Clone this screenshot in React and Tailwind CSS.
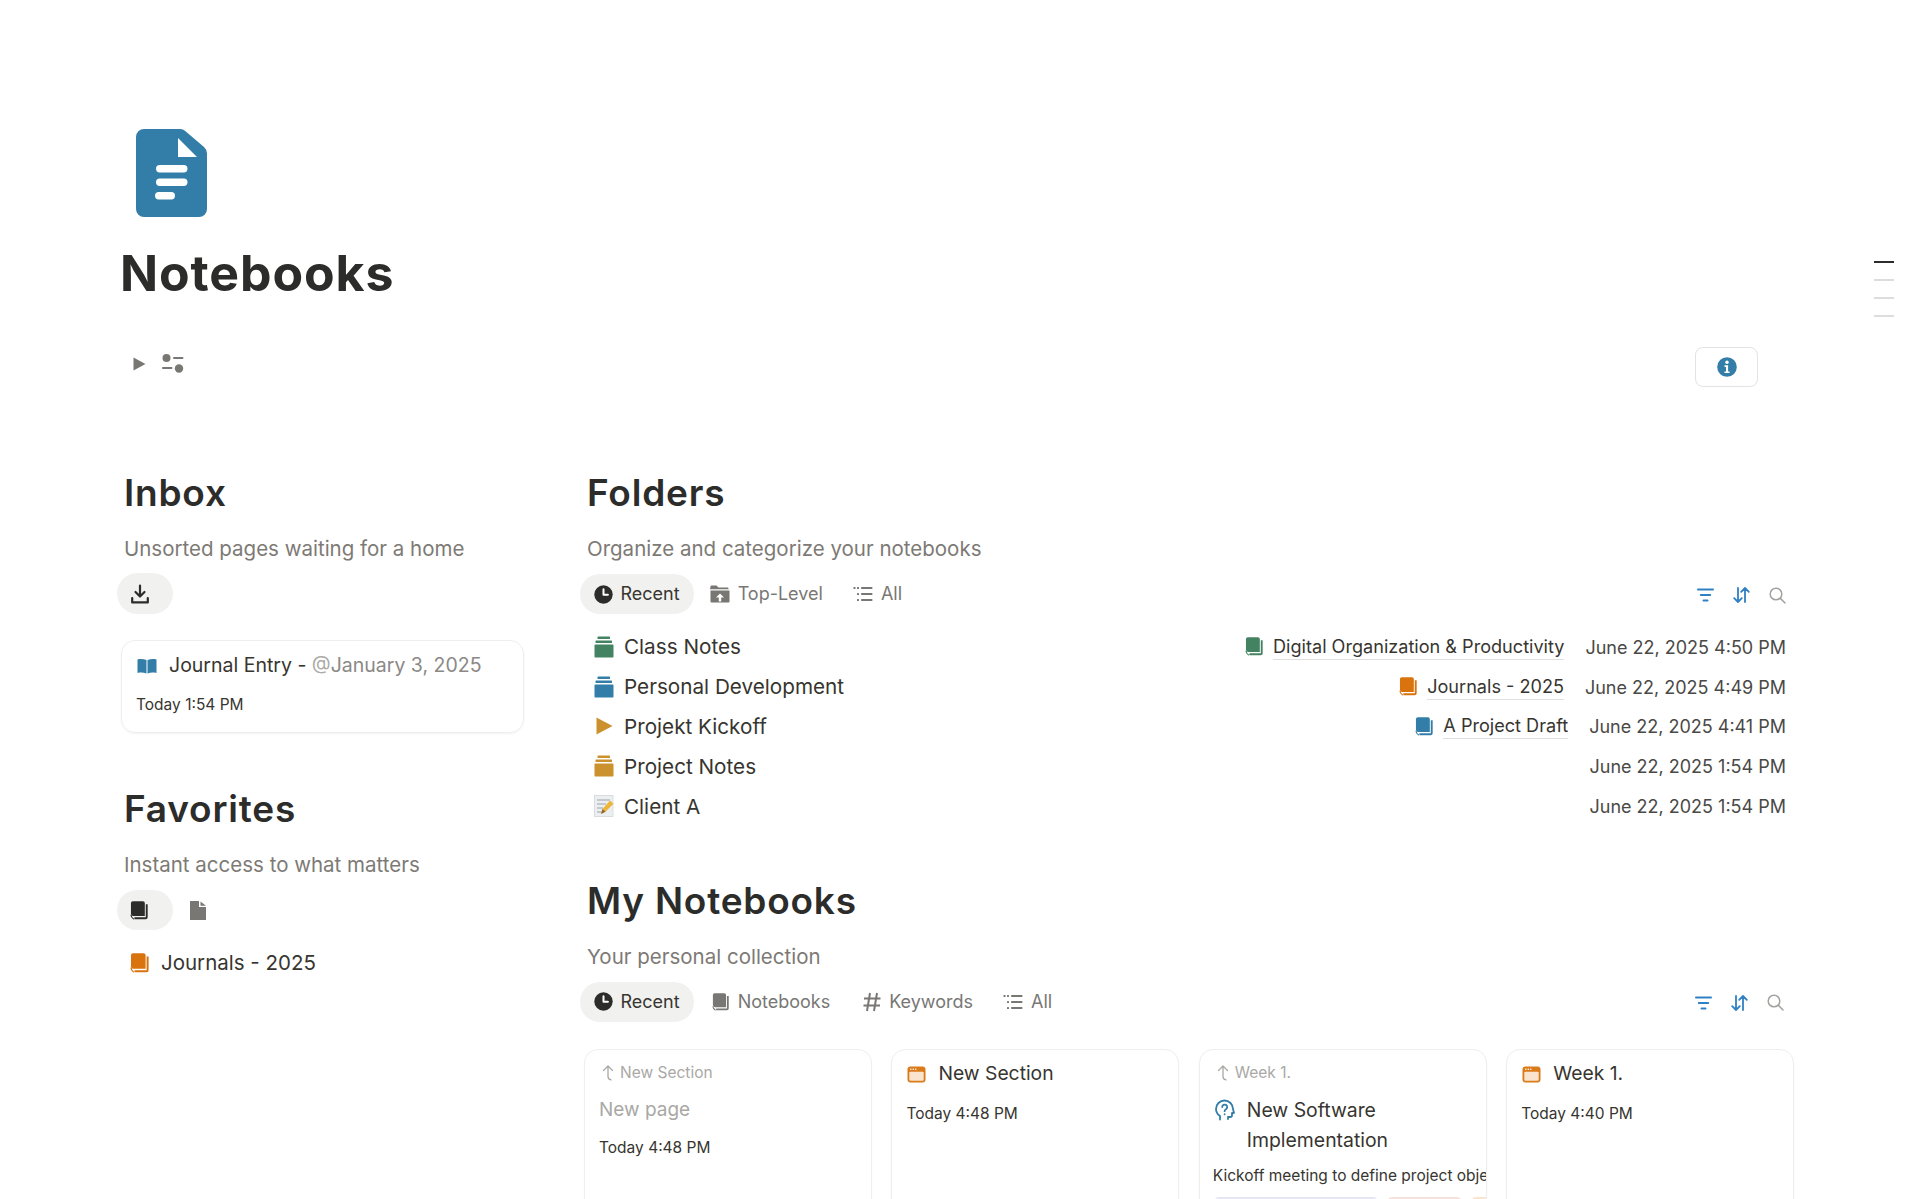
import React from "react";

const ink = "#2c2c2b";

const Stack = ({ c }) => (
  <svg width="20" height="22" viewBox="0 0 20 22" fill={c}>
    <rect x="3.5" y="0.5" width="12.5" height="2.6" rx="0.6" />
    <rect x="1.5" y="4.5" width="16.5" height="2.6" rx="0.6" />
    <rect x="0.5" y="8.6" width="19" height="13" rx="0.8" />
  </svg>
);

const Copy = ({ c, s = 20 }) => (
  <svg width={s} height={s} viewBox="0 0 20 20">
    <path d="M1 2.2A2 2 0 0 1 3 .2h10.6a2 2 0 0 1 2 2v13.6H3.4A2.4 2.4 0 0 1 1 13.4z" fill={c} />
    <path d="M17.6 3.4v13.8a1 1 0 0 1-1 1H4.6" fill="none" stroke={c} strokeWidth="2" />
    <path d="M1 14.6c0 2 1 3.4 3 4.6" fill="none" stroke={c} strokeWidth="1.2" />
  </svg>
);

const Clock = ({ c }) => (
  <svg width="19" height="19" viewBox="0 0 19 19">
    <circle cx="9.5" cy="9.5" r="9.2" fill={c} />
    <path d="M9.5 4.2v5.6h4.4" fill="none" stroke="#fff" strokeWidth="2" strokeLinecap="round" strokeLinejoin="round" />
  </svg>
);

const ListIcon = () => (
  <svg width="20" height="16" viewBox="0 0 20 16" fill="#787774">
    <rect x="0.5" y="1" width="2" height="2" rx="0.6" />
    <rect x="4" y="1" width="2" height="2" rx="0.6" />
    <rect x="8" y="1" width="11.5" height="2" rx="0.8" />
    <rect x="4" y="7" width="2" height="2" rx="0.6" />
    <rect x="8" y="7" width="11.5" height="2" rx="0.8" />
    <rect x="4" y="13" width="2" height="2" rx="0.6" />
    <rect x="8" y="13" width="11.5" height="2" rx="0.8" />
  </svg>
);

const FolderUp = () => (
  <svg width="20" height="18" viewBox="0 0 20 18" fill="#787774">
    <path d="M0.5 1.5a1 1 0 0 1 1-1h5l2 2h9a1 1 0 0 1 1 1v.7h-18.500z" />
    <path fillRule="evenodd" d="M0.5 5.500h19v11a1 1 0 0 1-1 1h-17a1 1 0 0 1-1-1zM10 8.500l-4 4h2.800v4h2.400v-4h2.800z" />
  </svg>
);

const Hash = () => (
  <svg width="18" height="20" viewBox="0 0 18 20" fill="none" stroke="#787774" strokeWidth="2">
    <path d="M7 1 4 19M14 1l-3 18M1 6.500h16.500M0.500 13.500h16.500" />
  </svg>
);

const Filter = () => (
  <svg width="17" height="14" viewBox="0 0 17 14" fill="none" stroke="#2f80c4" strokeWidth="2" strokeLinecap="round">
    <path d="M1 1.500h15M3.800 7h9.400M6.500 12.500h4" />
  </svg>
);

const Sort = () => (
  <svg width="17" height="16" viewBox="0 0 17 16" fill="none" stroke="#2f80c4" strokeWidth="1.800" strokeLinecap="round" strokeLinejoin="round">
    <path d="M5 1v14M1.200 11.200 5 15l3.800-3.800M12 15V1M8.200 4.800 12 1l3.800 3.800" />
  </svg>
);

const Search = () => (
  <svg width="17" height="17" viewBox="0 0 17 17" fill="none" stroke="#a3a29e" strokeWidth="1.500" strokeLinecap="round">
    <circle cx="7" cy="7" r="5.800" />
    <path d="m11.400 11.400 4.600 4.600" />
  </svg>
);

const TabRow = ({ children, right }) => (
  <div className="flex items-center justify-between h-10">
    <div className="flex items-center">{children}</div>
    {right && (
      <div className="flex items-center gap-[19px] pt-[2px]">
        <Filter />
        <Sort />
        <Search />
      </div>
    )}
  </div>
);

const ActiveTab = ({ children }) => (
  <div className="flex items-center gap-[7.500px] h-10 px-[14px] rounded-full bg-[#f1f1ef] text-[#37352f] text-[18px] leading-[38px]">
    {children}
  </div>
);

const Tab = ({ icon, label, className }) => (
  <div className={"flex items-center gap-[8px] h-10 text-[18px] leading-[38px] text-[#787774] " + className}>
    {icon}
    <span>{label}</span>
  </div>
);

const MemoIcon = () => (
  <svg width="20" height="22" viewBox="0 0 20 22">
    <rect x="0.500" y="0.500" width="18.500" height="21" fill="#eceff1" stroke="#c9ccce" strokeWidth="0.600" />
    <path d="M3 5h13M3 9h9M3 13h6M3 17h5" stroke="#9aa3a8" strokeWidth="1" />
    <path d="m7 19 1.500-5L16 5.500l3.500 3.300-8 8z" fill="#eeb53c" />
    <path d="m7 19 1.500-5 3 2.800z" fill="#8a6a3a" />
  </svg>
);

const FolderRow = ({ icon, name, rel, relIcon, date }) => (
  <div className="flex items-center justify-between h-[39.800px] pl-[14px] text-[#37352f]">
    <div className="flex items-center gap-[10px]">
      <span className="flex w-5 justify-center">{icon}</span>
      <span className="text-[20.700px]">{name}</span>
    </div>
    <div className="flex items-center gap-[21px]">
      {rel && (
        <div className="flex items-center gap-[9px]">
          {relIcon}
          <span className="text-[18.100px] border-b border-[#dfdfdd] leading-[25px]">{rel}</span>
        </div>
      )}
      <span className="pt-[1px] text-[18px] text-[#4a4946]">{date}</span>
    </div>
  </div>
);

const Up = () => (
  <svg width="14" height="16" viewBox="0 0 14 16" fill="none" stroke="#a9a8a5" strokeWidth="1.300" strokeLinecap="round" strokeLinejoin="round">
    <path d="M1.500 5.500 6 1l4.500 4.500M6 1v10.500c0 1.800 1.200 3 3 3.300" />
  </svg>
);

const Section = () => (
  <svg width="19" height="17" viewBox="0 0 19 17">
    <rect x="0.500" y="0.500" width="18" height="16" rx="3" fill="#d9730d" opacity="0.950" />
    <rect x="2.300" y="5.800" width="14.400" height="8.900" rx="1" fill="#fbe4cd" />
    <circle cx="3.800" cy="3.200" r="0.800" fill="#fff" />
    <circle cx="6.300" cy="3.200" r="0.800" fill="#fff" />
    <circle cx="8.800" cy="3.200" r="0.800" fill="#fff" />
  </svg>
);

const Head = () => (
  <svg width="20" height="22" viewBox="0 0 20 22" fill="none" stroke="#337ea9" strokeWidth="1.800" strokeLinecap="round" strokeLinejoin="round">
    <path d="M5 20.500V17C2.500 15.400 1 13 1 10a8.500 8.500 0 0 1 17 0l1 4h-2v2.500c0 1-.8 1.500-1.700 1.500H13v2" />
    <path d="M7.200 8a2.500 2.500 0 1 1 3.800 2.200c-1 .6-1.400 1.100-1.400 2" />
    <path d="M9.600 15.200v.1" />
  </svg>
);

const Card = ({ children }) => (
  <div className="w-[288px] h-[200px] shrink-0 rounded-[14px] border border-[#eeeeec] shadow-[0_1px_2px_rgba(0,0,0,0.03)] overflow-hidden text-[#37352f]">
    {children}
  </div>
);

const Crumb = ({ children }) => (
  <div className="flex items-center gap-[4px] h-5 text-[15.500px] text-[#a9a8a5] pl-[17px]">
    <Up />
    <span>{children}</span>
  </div>
);

const TitleOnly = ({ title, time }) => (
  <Card>
    <div className="flex items-center gap-[12px] pl-[15px] pt-[10px] h-[36px] text-[19.300px]">
      <span className="pt-[3px] flex"><Section /></span>
      <span>{title}</span>
    </div>
    <div className="pl-[14px] mt-[16px] text-[15.500px] leading-6 text-[#37352f]">{time}</div>
  </Card>
);

export default function App() {
  return (
    <div className="relative h-[1199px] w-full overflow-hidden bg-white font-['Inter',sans-serif]" style={{ color: ink }}>
      <div className="absolute right-[26px] top-[261px] flex w-5 flex-col gap-[16px]">
        <div className="h-[2px] bg-[#2c2c2b]" />
        <div className="h-[2px] bg-[#dddddb]" />
        <div className="h-[2px] bg-[#dddddb]" />
        <div className="h-[2px] bg-[#dddddb]" />
      </div>

      <div className="pt-[129px] pl-[136px]">
        <svg width="71" height="88" viewBox="0 0 71 88">
          <path d="M0 8a8 8 0 0 1 8-8h36a8 8 0 0 1 5.500 2.200L68 18a9 9 0 0 1 3 6.500V80a8 8 0 0 1-8 8H8a8 8 0 0 1-8-8z" fill="#337ea9" />
          <path d="M42 9v19h19z" fill="#fff" />
          <rect x="20" y="36" width="31.500" height="7.500" rx="3.700" fill="#fff" />
          <rect x="20" y="49.500" width="31.500" height="7.500" rx="3.700" fill="#fff" />
          <rect x="19" y="63" width="20" height="7.500" rx="3.700" fill="#fff" />
        </svg>
      </div>

      <h1 className="mt-[27px] pl-[120px] text-[50px] leading-[58px] font-bold tracking-[0.900px] text-[#2c2c2b]">Notebooks</h1>

      <div className="mt-[45px] flex h-10 items-center justify-between pl-[133px] pr-[162px]">
        <div className="flex items-center gap-[16px] -mt-[7px]">
          <svg width="13" height="14" viewBox="0 0 13 14" fill="#787774"><path d="M0.500 0.500 12.500 7 0.500 13.500z" /></svg>
          <svg width="22" height="19" viewBox="0 0 22 19" fill="#787774">
            <circle cx="4.500" cy="4" r="4" />
            <rect x="11" y="3" width="10.500" height="2" rx="1" />
            <rect x="0" y="13" width="10.500" height="2" rx="1" />
            <circle cx="17" cy="14.500" r="4.200" />
          </svg>
        </div>
        <div className="flex h-10 w-[63px] items-center justify-center rounded-[8px] border border-[#e3e3e1]">
          <svg width="20" height="20" viewBox="0 0 20 20">
            <circle cx="10" cy="10" r="9.800" fill="#337ea9" />
            <circle cx="10" cy="5.300" r="1.700" fill="#fff" />
            <path d="M7.500 8.300h3.600v6.200h1.500v1.600H7.500v-1.600H9v-4.600H7.500z" fill="#fff" />
          </svg>
        </div>
      </div>

      <div className="mt-[83px] flex pl-[117px]">
        <div className="w-[463px] shrink-0">
          <h2 className="pl-[7px] text-[37px] leading-[46px] font-semibold tracking-[0.800px]">Inbox</h2>
          <p className="mt-[18px] pl-[7px] text-[20.500px] leading-[30px] text-[#7d7a75]">Unsorted pages waiting for a home</p>
          <div className="mt-[9px] flex">
            <div className="flex h-[41px] w-[56px] items-center rounded-full bg-[#f1f1ef] pl-[14px]">
              <svg width="18" height="20" viewBox="0 0 18 20" fill="none" stroke="#2c2c2b" strokeWidth="2.200" strokeLinecap="round" strokeLinejoin="round">
                <path d="M9 1.500v10M4.500 8 9 12.500 13.500 8" />
                <path d="M1.200 14v4.400h15.600V14" />
              </svg>
            </div>
          </div>

          <div className="ml-[4px] mt-[26px] h-[93px] w-[403px] rounded-[14px] border border-[#eeeeec] pl-[14px] shadow-[0_1px_2px_rgba(0,0,0,0.05)]">
            <div className="mt-[9px] flex h-8 items-center gap-[12px] pl-[1px] text-[19.500px] text-[#37352f]">
              <svg width="20" height="16" viewBox="0 0 20 16" fill="#337ea9">
                <path d="M0.500 1.500c3-.8 6-.6 9 .6V15.500c-3-1.300-6-1.300-9-.6z" />
                <path d="M19.500 1.500c-3-.8-6-.6-9 .6V15.500c3-1.300 6-1.300 9-.6z" />
              </svg>
              <span>Journal Entry - <span className="text-[#8a8986]"><span className="text-[#acaba8]">@</span>January 3, 2025</span></span>
            </div>
            <div className="mt-[11px] text-[15.500px] leading-6 text-[#37352f]">Today 1:54 PM</div>
          </div>

          <h2 className="mt-[53px] pl-[7px] text-[37px] leading-[46px] font-semibold tracking-[0.800px]">Favorites</h2>
          <p className="mt-[18px] pl-[7px] text-[20.500px] leading-[30px] text-[#7d7a75]">Instant access to what matters</p>
          <div className="mt-[10px] flex items-center">
            <div className="flex h-10 w-[56px] items-center rounded-full bg-[#f1f1ef] pl-[13px]">
              <Copy c="#2c2c2b" s={19} />
            </div>
            <div className="ml-[17px]">
              <svg width="16" height="19" viewBox="0 0 16 19" fill="#787774">
                <path d="M0 0h9v6h7v13H0z" />
                <path d="M10.500 0.500 16 4.700h-5.500z" />
              </svg>
            </div>
          </div>
          <div className="mt-[18px] flex h-[30px] items-center gap-[11px] pl-[13px] text-[20.500px] text-[#37352f]">
            <Copy c="#d9730d" />
            <span>Journals - 2025</span>
          </div>
        </div>

        <div className="w-[1206px] shrink-0">
          <h2 className="pl-[7px] text-[37px] leading-[46px] font-semibold tracking-[0.800px]">Folders</h2>
          <p className="mt-[18px] pl-[7px] text-[20.500px] leading-[30px] text-[#7d7a75]">Organize and categorize your notebooks</p>
          <div className="mt-[10px]">
            <TabRow right>
              <ActiveTab><Clock c="#2c2c2b" /><span>Recent</span></ActiveTab>
              <Tab className="ml-[16px]" icon={<FolderUp />} label="Top-Level" />
              <Tab className="ml-[30px]" icon={<ListIcon />} label="All" />
            </TabRow>
          </div>

          <div className="mt-[13px]">
            <FolderRow icon={<Stack c="#448361" />} name="Class Notes" rel="Digital Organization & Productivity" relIcon={<Copy c="#448361" s={19} />} date="June 22, 2025 4:50 PM" />
            <FolderRow icon={<Stack c="#337ea9" />} name="Personal Development" rel="Journals - 2025" relIcon={<Copy c="#d9730d" s={19} />} date="June 22, 2025 4:49 PM" />
            <FolderRow
              icon={<svg width="17" height="18" viewBox="0 0 17 18" fill="#cb912f"><path d="M0.500 0.500 16.500 9 0.500 17.500z" /></svg>}
              name="Projekt Kickoff"
              rel="A Project Draft"
              relIcon={<Copy c="#337ea9" s={19} />}
              date="June 22, 2025 4:41 PM"
            />
            <FolderRow icon={<Stack c="#cb912f" />} name="Project Notes" date="June 22, 2025 1:54 PM" />
            <FolderRow icon={<MemoIcon />} name="Client A" date="June 22, 2025 1:54 PM" />
          </div>

          <h2 className="mt-[52px] pl-[7px] text-[37px] leading-[46px] font-semibold tracking-[0.800px]">My Notebooks</h2>
          <p className="mt-[18px] pl-[7px] text-[20.500px] leading-[30px] text-[#7d7a75]">Your personal collection</p>
          <div className="mt-[10px] pr-[2px]">
            <TabRow right>
              <ActiveTab><Clock c="#2c2c2b" /><span>Recent</span></ActiveTab>
              <Tab className="ml-[18px]" icon={<Copy c="#787774" s={18} />} label="Notebooks" />
              <Tab className="ml-[33px]" icon={<Hash />} label="Keywords" />
              <Tab className="ml-[30px]" icon={<ListIcon />} label="All" />
            </TabRow>
          </div>

          <div className="mt-[27px] flex gap-[19.400px] pl-[4px]">
            <Card>
              <div className="pt-[13px]"><Crumb>New Section</Crumb></div>
              <div className="mt-[12px] pl-[14px] text-[19px] leading-[30px] text-[#a9a8a5]">New page</div>
              <div className="mt-[11px] pl-[14px] text-[15.500px] leading-6">Today 4:48 PM</div>
            </Card>
            <TitleOnly title="New Section" time="Today 4:48 PM" />
            <Card>
              <div className="pt-[13px]"><Crumb>Week 1.</Crumb></div>
              <div className="mt-[12px] flex gap-[12px] pl-[15px]">
                <span className="pt-[4px]"><Head /></span>
                <span className="text-[19.400px] leading-[30px]">New Software<br />Implementation</span>
              </div>
              <div className="mt-[9px] whitespace-nowrap pl-[13px] text-[15.500px] leading-6">Kickoff meeting to define project objectives</div>
              <div className="mt-[9px] flex gap-[11px] pl-[15px]">
                <div className="h-6 w-[162px] shrink-0 rounded-[4px] bg-[#e6e6f5]" />
                <div className="h-6 w-[73px] shrink-0 rounded-[4px] bg-[#f8e1dd]" />
                <div className="h-6 w-[73px] shrink-0 rounded-[4px] bg-[#fbe4cd]" />
              </div>
            </Card>
            <TitleOnly title="Week 1." time="Today 4:40 PM" />
          </div>
        </div>
      </div>
    </div>
  );
}
